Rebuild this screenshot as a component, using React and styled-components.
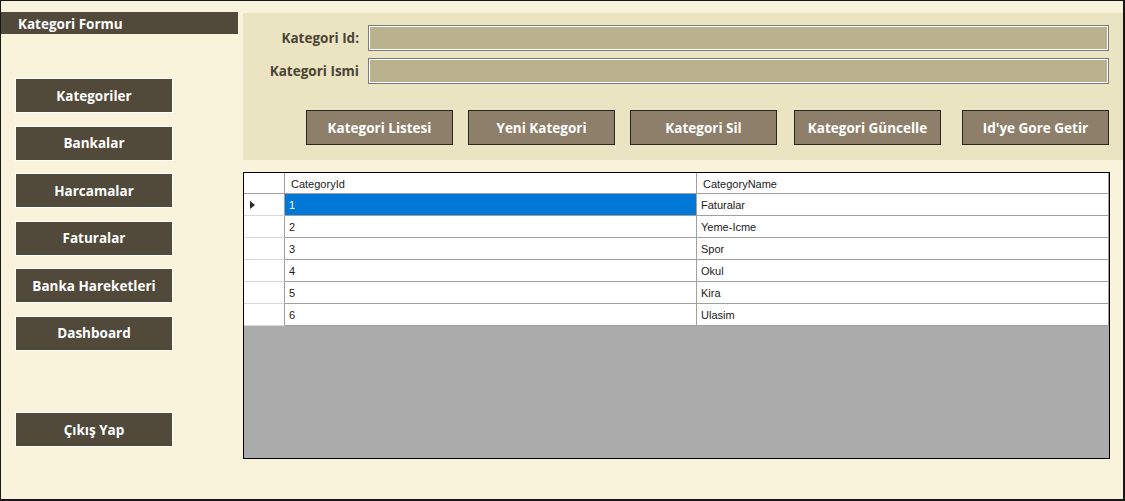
import React from "react";
import styled, { createGlobalStyle } from "styled-components";

const Global = createGlobalStyle`
  html, body { margin: 0; padding: 0; background: #F9F3DC; }
  * { box-sizing: border-box; }
`;

const Window = styled.div`
  width: 1125px;
  height: 501px;
  background: #F9F3DC;
  border-style: solid;
  border-color: #15171a;
  border-width: 1px 2px 2px 1px;
  display: flex;
  font-family: "Open Sans", "Noto Sans", sans-serif;
  overflow: hidden;
`;

const Sidebar = styled.aside`
  width: 242px;
  flex: none;
  display: flex;
  flex-direction: column;
  padding-top: 11px;
`;

const TitleBar = styled.div`
  width: 237px;
  height: 22px;
  background: #514A3B;
  color: #fff;
  font-weight: 700;
  font-size: 13.5px;
  line-height: 22px;
  padding: 1px 0 0 17px;
`;

const NavList = styled.nav`
  display: flex;
  flex-direction: column;
  gap: 12.5px;
  margin: 44px 0 0 14px;
`;

const NavButton = styled.button`
  width: 158px;
  height: 35px;
  background: #514A3B;
  border: 1px solid #fff;
  color: #fff;
  font-family: inherit;
  font-weight: 700;
  font-size: 13.5px;
  padding: 0;
  margin-top: ${(p) => (p.$push ? "49px" : "0")};
  cursor: pointer;
`;

const Main = styled.main`
  flex: 1;
  display: flex;
  flex-direction: column;
  padding-top: 12px;
`;

const FormPanel = styled.section`
  height: 147px;
  background: #EBE4C3;
  padding-top: 12px;
`;

const Fields = styled.div`
  display: grid;
  grid-template-columns: 116px 741px;
  column-gap: 9px;
  row-gap: 7px;
  align-items: center;
`;

const Label = styled.label`
  text-align: right;
  color: #4B4433;
  font-weight: 700;
  font-size: 13.5px;
`;

const TextBox = styled.input`
  height: 26px;
  background: #B9B28C;
  border: 1px solid #7a7a7a;
  box-shadow: inset 0 0 0 1px #fff;
  outline: none;
  padding: 0 4px;
`;

const ActionRow = styled.div`
  display: flex;
  margin: 26px 0 0 63px;
`;

const ActionButton = styled.button`
  width: 147px;
  height: 35px;
  background: #8E7F6B;
  border: 1px solid #2a2620;
  color: #fff;
  font-family: inherit;
  font-weight: 700;
  font-size: 13.5px;
  padding: 0;
  margin-left: ${(p) => p.$gap}px;
  cursor: pointer;
`;

const Grid = styled.div`
  margin-top: 12px;
  width: 867px;
  height: 287px;
  border: 1px solid #000;
  background: #ABABAB;
  display: grid;
  grid-template-columns: 41px 412px 412px;
  grid-auto-rows: 22px;
  grid-template-rows: 21px;
  align-content: start;
  font-family: "Liberation Sans", Arial, sans-serif;
  font-size: 11px;
`;

const HeadCell = styled.div`
  background: #fff;
  color: #1a1a1a;
  border-right: 1px solid #A0A0A0;
  border-bottom: 1px solid #A0A0A0;
  padding: 1px 0 0 6px;
  display: flex;
  align-items: center;
`;

const RowHead = styled.div`
  background: #fff;
  border-right: 1px solid #A0A0A0;
  border-bottom: 1px solid #D8D8D8;
  position: relative;
`;

const Arrow = styled.span`
  position: absolute;
  left: 6px;
  top: 7px;
  width: 0;
  height: 0;
  border-top: 4px solid transparent;
  border-bottom: 4px solid transparent;
  border-left: 5px solid #2b2b2b;
`;

const Cell = styled.div`
  background: ${(p) => (p.$selected ? "#0078D7" : "#fff")};
  color: ${(p) => (p.$selected ? "#fff" : "#1a1a1a")};
  border-right: 1px solid #A0A0A0;
  border-bottom: 1px solid #A0A0A0;
  padding: 1px 0 0 4px;
  display: flex;
  align-items: center;
`;

const rows = [
  [1, "Faturalar"],
  [2, "Yeme-Icme"],
  [3, "Spor"],
  [4, "Okul"],
  [5, "Kira"],
  [6, "Ulasim"],
];

const nav = [
  "Kategoriler",
  "Bankalar",
  "Harcamalar",
  "Faturalar",
  "Banka Hareketleri",
  "Dashboard",
];

const actions = [
  ["Kategori Listesi", 0],
  ["Yeni Kategori", 15],
  ["Kategori Sil", 15],
  ["Kategori Güncelle", 17],
  ["Id'ye Gore Getir", 21],
];

export default function App() {
  return (
    <>
      <Global />
      <Window>
        <Sidebar>
          <TitleBar>Kategori Formu</TitleBar>
          <NavList>
            {nav.map((n) => (
              <NavButton key={n}>{n}</NavButton>
            ))}
            <NavButton $push>Çıkış Yap</NavButton>
          </NavList>
        </Sidebar>
        <Main>
          <FormPanel>
            <Fields>
              <Label>Kategori Id:</Label>
              <TextBox />
              <Label>Kategori Ismi</Label>
              <TextBox />
            </Fields>
            <ActionRow>
              {actions.map(([a, g]) => (
                <ActionButton key={a} $gap={g}>
                  {a}
                </ActionButton>
              ))}
            </ActionRow>
          </FormPanel>
          <Grid>
            <HeadCell />
            <HeadCell>CategoryId</HeadCell>
            <HeadCell>CategoryName</HeadCell>
            {rows.map(([id, name], i) => (
              <React.Fragment key={id}>
                <RowHead>{i === 0 && <Arrow />}</RowHead>
                <Cell $selected={i === 0}>{id}</Cell>
                <Cell>{name}</Cell>
              </React.Fragment>
            ))}
          </Grid>
        </Main>
      </Window>
    </>
  );
}
